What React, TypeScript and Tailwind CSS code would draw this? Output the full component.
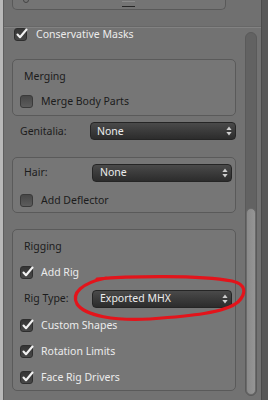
import React from "react";

function Check({ checked }: { checked: boolean }) {
  if (checked) {
    return (
      <div className="relative w-[13px] h-[13px] shrink-0 rounded-[3px] border border-[#2e2e2e] bg-linear-to-b from-[#353535] to-[#474747]">
        <svg className="absolute left-[-1px] top-[-2px]" width="15" height="15" viewBox="0 0 15 15">
          <path d="M3.5 7.5 L6 10.2 L12.5 2.5" fill="none" stroke="#f2f2f2" strokeWidth="2.1" strokeLinecap="round" strokeLinejoin="round" />
        </svg>
      </div>
    );
  }
  return (
    <div className="w-[13px] h-[13px] shrink-0 rounded-[3px] border border-[#3a3a3a] bg-linear-to-b from-[#474747] to-[#5c5c5c]" />
  );
}

function Dropdown({ text, w, pl }: { text: string; w: string; pl: string }) {
  return (
    <div className={`${w} ${pl} h-[18px] shrink-0 rounded-[4px] border border-[#252525] bg-linear-to-b from-[#4a4a4a] to-[#2c2c2c] flex items-center justify-between pr-[3px] text-[#ececec]`}>
      <span className="leading-none">{text}</span>
      <svg width="6" height="10" viewBox="0 0 6 10">
        <path d="M3 0.5 L5.6 4 L0.4 4 Z" fill="#cfcfcf" />
        <path d="M0.4 6 L5.6 6 L3 9.5 Z" fill="#cfcfcf" />
      </svg>
    </div>
  );
}

export default function App() {
  return (
    <div className="relative w-[268px] h-[400px] overflow-hidden flex bg-[#727272] font-['Noto_Sans','DejaVu_Sans',sans-serif] text-[10.5px]">
      <div className="w-[3px] shrink-0 bg-[#b9b9b9]" />
      <div className="w-px shrink-0 bg-[#5e5e5e]" />
      <div className="w-[257px] shrink-0 flex flex-col">
        {/* top region */}
        <div className="h-[26px] shrink-0 bg-[#707070]">
          <div className="relative ml-[8px] w-[214px] h-[10px] border border-t-0 border-[#595959] rounded-b-[5px] bg-[#747474]">
            <div className="absolute left-[10px] top-[-3px] w-[6px] h-[6px] rounded-full border border-[#454545]" />
            <div className="absolute left-[109px] top-[1px] w-[13px] h-px bg-[#8a8a8a]" />
            <div className="absolute left-[109px] top-[6px] w-[13px] h-px bg-[#262626]" />
          </div>
        </div>
        <div className="h-px shrink-0 bg-[#676767]" />
        <div className="h-px shrink-0 bg-[#828282]" />
        {/* lower region */}
        <div className="flex flex-1">
          <div className="w-[241px] shrink-0 flex flex-col">
            <div className="h-[13px] flex items-center pl-[10px] gap-[9px]">
              <Check checked />
              <span className="text-[#ececec] leading-none">Conservative Masks</span>
            </div>

            {/* Box 1 */}
            <div className="mt-[18px] ml-[8px] w-[224px] h-[57px] border border-[#5a5a5a] rounded-[5px] bg-[#767676] pt-[5px] pb-[2px] flex flex-col">
              <div className="h-[24px] flex items-center pl-[11px] text-[#1c1c1c]">Merging</div>
              <div className="h-[24px] flex items-center pl-[7px] gap-[8px]">
                <Check checked={false} />
                <span className="text-[#1c1c1c] leading-none">Merge Body Parts</span>
              </div>
            </div>

            {/* Genitalia */}
            <div className="mt-[6px] h-[18px] flex items-center">
              <span className="w-[86px] pl-[16px] text-[#1c1c1c] leading-none">Genitalia:</span>
              <Dropdown text="None" w="w-[146px]" pl="pl-[6px]" />
            </div>

            {/* Box 2 */}
            <div className="mt-[17px] ml-[8px] w-[224px] h-[56px] border border-[#5a5a5a] rounded-[5px] bg-[#767676] pt-[5px] flex flex-col">
              <div className="h-[19px] flex items-center">
                <span className="w-[79px] pl-[11px] text-[#1c1c1c] leading-none">Hair:</span>
                <Dropdown text="None" w="w-[140px]" pl="pl-[7px]" />
              </div>
              <div className="mt-[11px] h-[14px] flex items-center pl-[7px] gap-[8px]">
                <Check checked={false} />
                <span className="text-[#1c1c1c] leading-none">Add Deflector</span>
              </div>
            </div>

            {/* Box 3 */}
            <div className="mt-[16px] ml-[8px] w-[224px] h-[162px] border border-[#5a5a5a] rounded-[5px] bg-[#767676] pt-[4px] flex flex-col">
              <div className="h-[26px] flex items-center pl-[11px] text-[#1c1c1c]">Rigging</div>
              <div className="h-[25px] flex items-center pl-[7px] gap-[8px]">
                <Check checked />
                <span className="text-[#ececec] leading-none">Add Rig</span>
              </div>
              <div className="h-[27px] flex items-center">
                <span className="w-[79px] pl-[11px] text-[#1c1c1c] leading-none">Rig Type:</span>
                <Dropdown text="Exported MHX" w="w-[140px]" pl="pl-[7px]" />
              </div>
              <div className="h-[26px] flex items-center pl-[7px] gap-[8px]">
                <Check checked />
                <span className="text-[#ececec] leading-none">Custom Shapes</span>
              </div>
              <div className="h-[26px] flex items-center pl-[7px] gap-[8px]">
                <Check checked />
                <span className="text-[#ececec] leading-none">Rotation Limits</span>
              </div>
              <div className="h-[26px] flex items-center pl-[7px] gap-[8px]">
                <Check checked />
                <span className="text-[#ececec] leading-none">Face Rig Drivers</span>
              </div>
            </div>
          </div>

          {/* scrollbar */}
          <div className="w-[12px] shrink-0 pt-[4px] pb-[4px] flex flex-col">
            <div className="flex-1 rounded-full bg-[#626262] border border-[#5a5a5a] flex flex-col justify-end">
              <div className="h-[187px] rounded-full bg-linear-to-r from-[#8a8a8a] to-[#959595] border border-[#6a6a6a]" />
            </div>
          </div>
          <div className="w-[4px] shrink-0" />
        </div>
      </div>
      <div className="w-px shrink-0 bg-[#4b4b4b]" />
      <div className="w-[6px] shrink-0 bg-[#585858]" />

      {/* red hand-drawn annotation */}
      <svg className="absolute left-0 top-0 pointer-events-none" width="268" height="400" viewBox="0 0 268 400">
        <path
          d="M97 279 C130 276, 200 275, 232 281 C246 284, 247 293, 238 302 C225 313, 190 316, 150 319 C115 321, 85 316, 77 304 C71 293, 82 283, 106 278"
          fill="none"
          stroke="#e3141b"
          strokeWidth="3.2"
          strokeLinecap="round"
          strokeLinejoin="round"
        />
      </svg>
    </div>
  );
}
